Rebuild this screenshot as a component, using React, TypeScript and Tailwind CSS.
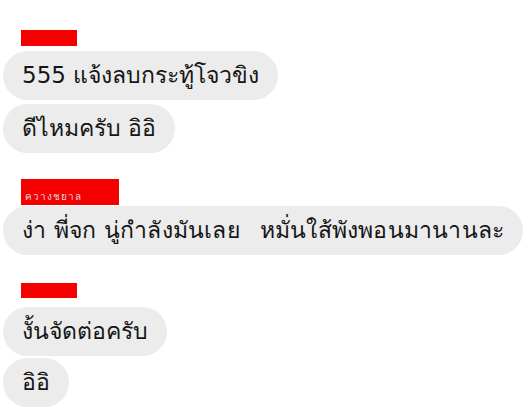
import React from 'react';

const font = { fontFamily: '"DejaVu Sans", "Noto Sans", Tahoma, sans-serif' };

const Bubble = ({ children }: { children: React.ReactNode }) => (
  <div className="h-[49px] flex items-center rounded-[25px] bg-[#ececec] px-[19px] text-[23px] text-[#161616] whitespace-nowrap leading-none">
    {children}
  </div>
);

const Name = ({ w, h, label }: { w: string; h: string; label?: string }) => (
  <div className={`${w} ${h} bg-[#f40000] ml-[18px] flex items-end px-[4px] pb-[3px]`}>
    {label && <span className="text-[10px] leading-none text-[#d8d8d8] tracking-[1px]">{label}</span>}
  </div>
);

export default function App() {
  return (
    <div className="w-[530px] h-[416px] bg-white overflow-hidden pl-[3px]" style={font}>
      <div className="flex flex-col items-start">
        <div className="pt-[30px] pb-[5px]">
          <Name w="w-[56px]" h="h-[16px]" />
        </div>
        <div className="flex flex-col items-start gap-[4px]">
          <Bubble>555 แจ้งลบกระทู้โจวขิง</Bubble>
          <Bubble>ดีไหมครับ อิอิ</Bubble>
        </div>

        <div className="pt-[26px] pb-[1px]">
          <Name w="w-[98px]" h="h-[26px]" label="ควางชยาล" />
        </div>
        <Bubble>
          <span className="tracking-[0.2px]">ง่า พี่จก นู่กำลังมันเลย</span>
          <span className="inline-block w-[20px]" />
          <span className="tracking-[0.2px]">หมั่นใส้พังพอนมานานละ</span>
        </Bubble>

        <div className="pt-[28px] pb-[9px]">
          <Name w="w-[56px]" h="h-[15px]" />
        </div>
        <div className="flex flex-col items-start gap-[2px]">
          <Bubble>งั้นจัดต่อครับ</Bubble>
          <Bubble>อิอิ</Bubble>
        </div>
      </div>
    </div>
  );
}
